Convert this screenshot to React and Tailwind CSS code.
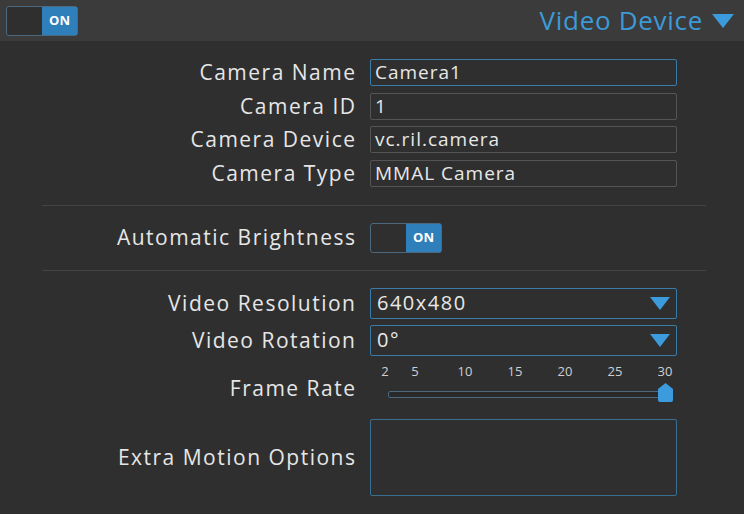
import React from 'react';

const Toggle = () => (
  <div className="flex h-[30px] w-[72px] rounded-[3px] border border-[#4b6a80] bg-[#2f2f2f]">
    <div className="flex-1" />
    <div className="flex w-[35px] items-center justify-center bg-[#2f7fbb] text-[13px] font-bold text-white">ON</div>
  </div>
);

const Caret = () => (
  <svg width="22" height="14" viewBox="0 0 22 14"><path d="M0 0h22L11 14z" fill="#3b9bdc" /></svg>
);

const Row = ({ label, children, className = '', labelClass = '' }) => (
  <div className={`flex items-center ${className}`}>
    <div className={`-mr-[1.5px] w-[356.5px] text-right text-[21px] leading-[27px] tracking-[1.5px] text-[#e6e6e6] ${labelClass}`}>{label}</div>
    <div className="ml-[15px] w-[307px]">{children}</div>
  </div>
);

const TextBox = ({ value, focus }) => (
  <div className={`flex h-[27px] items-center rounded-[2px] border px-[4px] text-[19px] tracking-[1px] text-[#e8e8e8] ${focus ? 'border-[#3b7ba8]' : 'border-[#555]'}`}>
    {value}
  </div>
);

const Select = ({ value }) => (
  <div className="flex h-[31px] items-center justify-between rounded-[2px] border border-[#3b7ba8] pl-[6px] pr-[6px] text-[20px] tracking-[1.5px] text-[#e8e8e8]">
    <span>{value}</span>
    <svg width="20" height="13" viewBox="0 0 20 13"><path d="M0 0h20L10 13z" fill="#3b9bdc" /></svg>
  </div>
);

const ticks = [2, 5, 10, 15, 20, 25, 30];

export default function App() {
  return (
    <div className="h-[514px] w-[744px] bg-[#2f2f2f]" style={{ fontFamily: '"Open Sans", sans-serif' }}>
      <div className="flex h-[41px] items-center justify-between bg-[#3b3b3b] pl-[6px] pr-[10px]">
        <Toggle />
        <div className="flex items-center gap-[9px] text-[26px] tracking-[0.7px] text-[#3c9ad8]">
          <span>Video Device</span>
          <Caret />
        </div>
      </div>

      <div className="flex flex-col gap-[6.5px] pt-[18px]">
        <Row label="Camera Name"><TextBox value="Camera1" focus /></Row>
        <Row label="Camera ID"><TextBox value="1" /></Row>
        <Row label="Camera Device"><TextBox value="vc.ril.camera" /></Row>
        <Row label="Camera Type"><TextBox value="MMAL Camera" /></Row>
      </div>

      <div className="ml-[42px] mr-[38px] mt-[18px] border-t border-[#444]" />
      <Row label="Automatic Brightness" className="py-[17px]"><Toggle /></Row>
      <div className="ml-[42px] mr-[38px] border-t border-[#444]" />

      <div className="flex flex-col gap-[6px] pt-[17px]">
        <Row label="Video Resolution"><Select value="640x480" /></Row>
        <Row label="Video Rotation"><Select value="0°" /></Row>
        <Row label="Frame Rate" className="!items-end" labelClass="mb-[4px]">
          <div className="relative h-[44px] w-[307px]">
            {ticks.map((t) => (
              <span
                key={t}
                className="absolute top-[0px] -translate-x-1/2 text-[13px] leading-[18px] text-[#cfcfcf]"
                style={{ left: 15 + (t - 2) * 10 }}
              >
                {t}
              </span>
            ))}
            <div className="absolute left-[18px] top-[29px] h-[7px] w-[276px] rounded-[2px] border border-[#4b6a80] bg-[#2a2a2a]" />
            <svg className="absolute left-[288px] top-[21px]" width="15" height="19" viewBox="0 0 15 19">
              <path d="M0 6L7.5 0L15 6v11a2 2 0 01-2 2H2a2 2 0 01-2-2z" fill="#3b9bdc" />
            </svg>
          </div>
        </Row>
        <Row label="Extra Motion Options" className="mt-[7px]">
          <div className="h-[77px] rounded-[2px] border border-[#3b6f92]" />
        </Row>
      </div>
    </div>
  );
}
